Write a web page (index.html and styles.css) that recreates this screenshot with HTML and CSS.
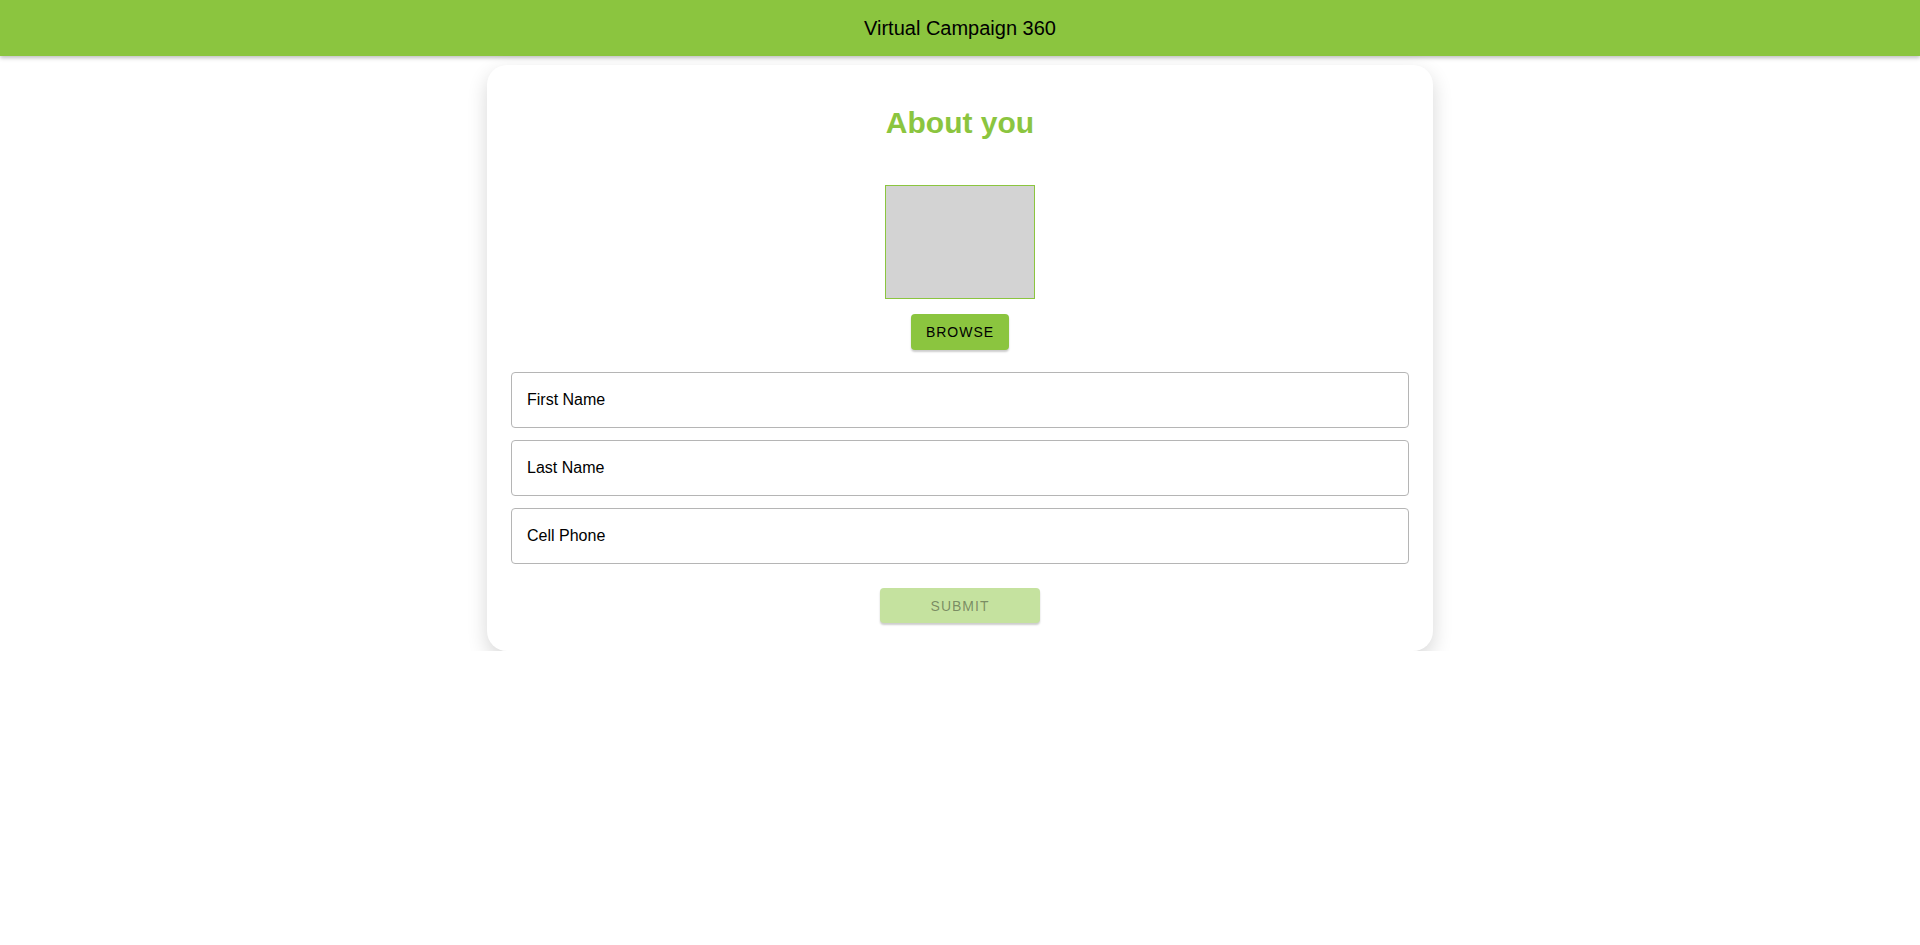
FILE: index.html
```html
<!DOCTYPE html>
<html>
<head>
    <title>Virtual Campaign 360</title>
    <meta name="viewport" content="width=device-width, initial-scale=1">
<link rel="stylesheet" href="styles.css">
</head>
<body>

  <div class="topbar">
    <span class="brand">Virtual Campaign 360</span>
  </div>

  <div class="card">
    <h2 class="title">About you</h2>

    <div class="photo"></div>
    <button class="btn browse">Browse</button>

    <div class="fields">
      <input class="field" type="text" placeholder="First Name">
      <input class="field" type="text" placeholder="Last Name">
      <input class="field" type="text" placeholder="Cell Phone">
    </div>

    <button class="btn submit" disabled>Submit</button>
  </div>

</body>
</html>
```

FILE: styles.css
```css
body {
  margin: 0;
  font-family: "Liberation Sans", Arial, sans-serif;
  background-color: #fff;
}

.topbar {
  height: 56px;
  background-color: #8bc53f;
  display: flex;
  align-items: center;
  justify-content: center;
  box-shadow: 0 2px 4px rgba(0, 0, 0, 0.25);
}

.brand {
  font-size: 20px;
  color: #000;
}

.card {
  width: 898px;
  margin: 9px auto 0;
  padding: 24px 24px 28px;
  background: #fff;
  border-radius: 20px;
  box-shadow: 0 8px 20px rgba(0, 0, 0, 0.16);
  display: flex;
  flex-direction: column;
  align-items: center;
}

.title {
  margin: 17px 0 0;
  font-size: 30px;
  line-height: 34px;
  font-weight: bold;
  color: #8bc53f;
}

.photo {
  margin-top: 45px;
  width: 148px;
  height: 112px;
  background: #d3d3d3;
  border: 1px solid #8bc53f;
}

.btn {
  font-family: "Liberation Sans", Arial, sans-serif;
  font-size: 14px;
  font-weight: normal;
  letter-spacing: 1px;
  text-transform: uppercase;
  height: 36px;
  border: none;
  border-radius: 4px;
  box-shadow: 0 2px 2px rgba(0, 0, 0, 0.2);
}

.browse {
  margin-top: 15px;
  width: 98px;
  background: #8bc53f;
  color: #000;
}

.fields {
  margin-top: 22px;
  width: 100%;
  display: flex;
  flex-direction: column;
  gap: 12px;
}

.field {
  box-sizing: border-box;
  height: 56px;
  width: 100%;
  padding: 0 15px;
  border: 1px solid #b5b5b5;
  border-radius: 4px;
  font-family: "Liberation Sans", Arial, sans-serif;
  font-size: 16px;
  color: #000;
  outline: none;
}

.field::placeholder {
  color: #000;
  opacity: 1;
}

.submit {
  margin-top: 24px;
  width: 160px;
  height: 35px;
  background: #c5e29f;
  color: rgba(0, 0, 0, 0.4);
}
```
